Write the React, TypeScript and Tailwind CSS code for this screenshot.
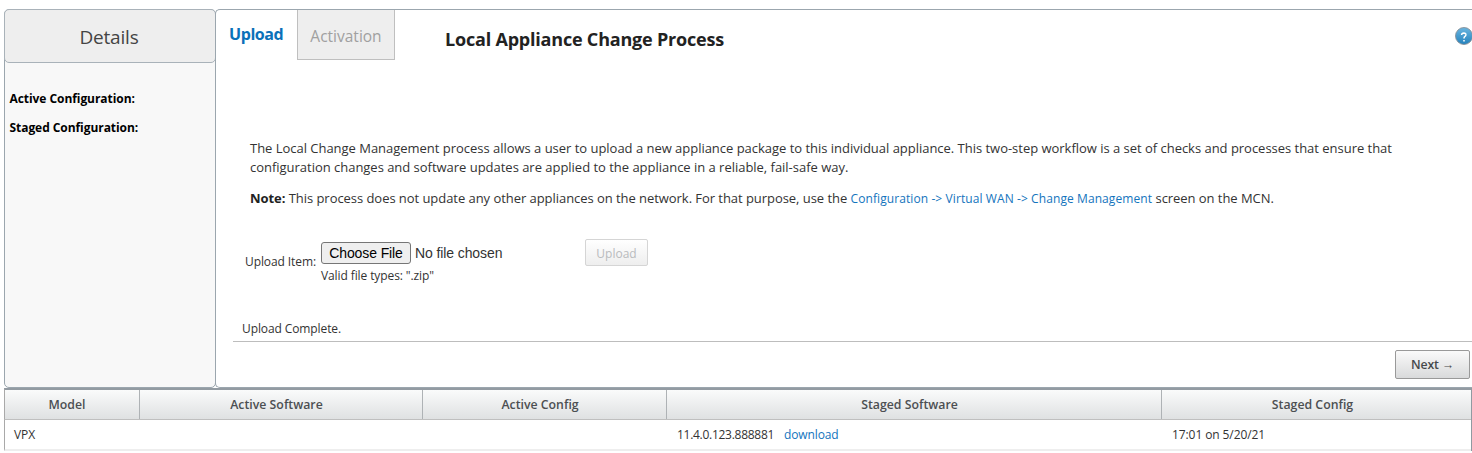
import React from "react";

function Sidebar() {
  return (
    <aside className="w-[212px] shrink-0 rounded-[5px] border border-[#9ba6ae] bg-[#f8f8f8]">
      <div className="-mx-px -mt-px flex h-[54px] items-center justify-center rounded-[5px] border border-[#a9b2b9] bg-[#eeeeee] pr-[2px] pt-[2px] text-[19px] tracking-[-0.2px] text-[#444444]">
        Details
      </div>
      <div className="flex flex-col gap-[9px] pl-[4.5px] pt-[26px] text-[12px] leading-5 font-bold tracking-[-0.06px] text-black">
        <div>Active Configuration:</div>
        <div>Staged Configuration:</div>
      </div>
    </aside>
  );
}

function HelpIcon() {
  return (
    <svg width="18" height="18" viewBox="0 0 18 18" className="block shrink-0">
      <defs>
        <linearGradient id="help" x1="0" y1="0" x2="0" y2="1">
          <stop offset="0" stopColor="#69b5e0" />
          <stop offset="1" stopColor="#2482bd" />
        </linearGradient>
      </defs>
      <circle cx="9" cy="9" r="8.5" fill="url(#help)" stroke="#8a9197" strokeWidth="0.9" />
      <path d="M6.6 8Q6.7 6.1 8.9 6.1Q11 6.2 10.9 7.9Q10.8 9 9.7 9.6Q9 10.1 9 11.6M9 12.9V14.5" fill="none" stroke="#fff" strokeWidth="1.5" />
    </svg>
  );
}

function TabBar() {
  return (
    <header className="flex h-[50px]">
      <div className="w-[80px] pl-3 pt-3 text-[16px] leading-6 font-bold tracking-[-0.42px] text-[#0b71b9]">Upload</div>
      <div className="flex h-[50px] w-[98px] items-center justify-center border border-t-0 border-[#bfbfbf] bg-[#eeeeee] pt-[4px] text-[15.5px] text-[#a0a0a0]">
        Activation
      </div>
      <h1 className="ml-[50px] pt-[17px] text-[18px] leading-6 font-bold tracking-[-0.2px] whitespace-nowrap text-[#222222]">
        Local Appliance Change Process
      </h1>
      <div className="-mr-px ml-auto pt-[17px]">
        <HelpIcon />
      </div>
    </header>
  );
}

function Description() {
  return (
    <div className="pl-[33px] pt-[79px] text-[13px] leading-[19px] whitespace-nowrap text-[#333333]">
      <p className="tracking-[-0.022px]">
        The Local Change Management process allows a user to upload a new appliance package to this individual appliance. This two-step workflow is a set of checks and processes that ensure that
        <br />
        configuration changes and software updates are applied to the appliance in a reliable, fail-safe way.
      </p>
      <p className="mt-3 tracking-[-0.05px]">
        <b className="tracking-[-0.05px] text-[#222222]">Note:</b> This process does not update any other appliances on the network. For that purpose, use the{" "}
        <a className="text-[12px] tracking-[0.09px] text-[#1374bd]">Configuration -&gt; Virtual WAN -&gt; Change Management</a>{" "}
        screen on the MCN.
      </p>
    </div>
  );
}

function UploadForm() {
  return (
    <div className="mt-[31px] flex h-[49px] items-start pl-[28px] text-[12px] text-[#333333]">
      <div className="w-[76px] pt-[13px] leading-5 tracking-[-0.09px]">Upload Item:</div>
      <div className="w-[264px] pt-[3px]">
        <div className="flex items-center gap-[4px] font-['Liberation_Sans',sans-serif] text-[14px] leading-4">
          <button className="h-[22px] w-[90px] rounded-[3px] border border-[#767676] bg-[#efefef] tracking-[-0.1px] text-black">Choose File</button>
          <span className="tracking-[-0.1px]">No file chosen</span>
        </div>
        <div className="pt-[2px] leading-5 tracking-[-0.1px]">Valid file types: ".zip"</div>
      </div>
      <button className="h-[27px] w-[63px] rounded-[2px] border border-[#d5d5d5] bg-linear-to-b from-white to-[#eeeeee] pt-[2px] text-[12px] text-[#b9bbbd]">
        Upload
      </button>
    </div>
  );
}

const columns = [
  { title: "Model", width: "w-[136px]", value: "VPX" },
  { title: "Active Software", width: "w-[283px]", value: "" },
  { title: "Active Config", width: "w-[244px]", value: "" },
  { title: "Staged Software", width: "w-[495px]", value: "11.4.0.123.888881", link: "download" },
  { title: "Staged Config", width: "w-[310px]", value: "17:01 on 5/20/21" },
];

function ApplianceTable() {
  return (
    <section className="ml-1 h-[63px] border-x border-t-2 border-l-[#a9a9a9] border-r-[#909aa1] border-t-[#939ba2] text-[12px]">
      <div className="-ml-px flex h-[30px] border-b border-l border-b-[#bfbfbf] border-l-[#a9a9a9] bg-linear-to-b from-[#fafbfb] to-[#dfe1e2]">
        {columns.map((c, i) => (
          <div
            key={c.title}
            className={`${c.width} ${i < 4 ? "border-r border-[#aeb2b5]" : ""} ${i === 0 ? "-ml-px" : ""} flex shrink-0 items-center justify-center pt-[2px] pr-[9px] text-[12.3px] font-semibold text-[#4c4f52]`}
          >
            {c.title}
          </div>
        ))}
      </div>
      <div className="-ml-px flex h-[31px] border-b-2 border-l border-b-[#eeeeee] border-l-[#a9a9a9] text-[#333333]">
        {columns.map((c) => (
          <div key={c.title} className={`${c.width} -ml-px mr-px flex shrink-0 items-center gap-[10px] pl-[10px]`}>
            <span className={c.link ? "tracking-[-0.28px]" : "tracking-[-0.09px]"}>{c.value}</span>
            {c.link && <a className="tracking-[-0.12px] text-[#1374bd]">{c.link}</a>}
          </div>
        ))}
      </div>
    </section>
  );
}

export default function App() {
  return (
    <div className="h-[453px] overflow-hidden bg-white pt-[9px] font-['Open_Sans','Noto_Sans',sans-serif]">
      <div className="flex h-[379px] pl-1">
        <Sidebar />
        <main className="-ml-px flex min-w-0 grow flex-col rounded-l-[5px] border border-r-0 border-[#9ba6ae] pl-px">
          <TabBar />
          <Description />
          <UploadForm />
          <div className="ml-4 mt-[29px] h-[25px] border-b border-[#bdbdbd] pl-[9px] text-[12px] leading-6 tracking-[-0.1px] text-[#333333]">Upload Complete.</div>
          <div className="flex justify-end pr-[2px] pt-2">
            <button className="h-[29px] w-[75px] rounded-[2px] border border-[#999999] bg-linear-to-b from-[#fafafa] to-[#d9dadb] pt-[2px] text-[12.3px] font-semibold tracking-[-0.15px] text-[#46494c]">
              Next →
            </button>
          </div>
        </main>
      </div>
      <ApplianceTable />
    </div>
  );
}
